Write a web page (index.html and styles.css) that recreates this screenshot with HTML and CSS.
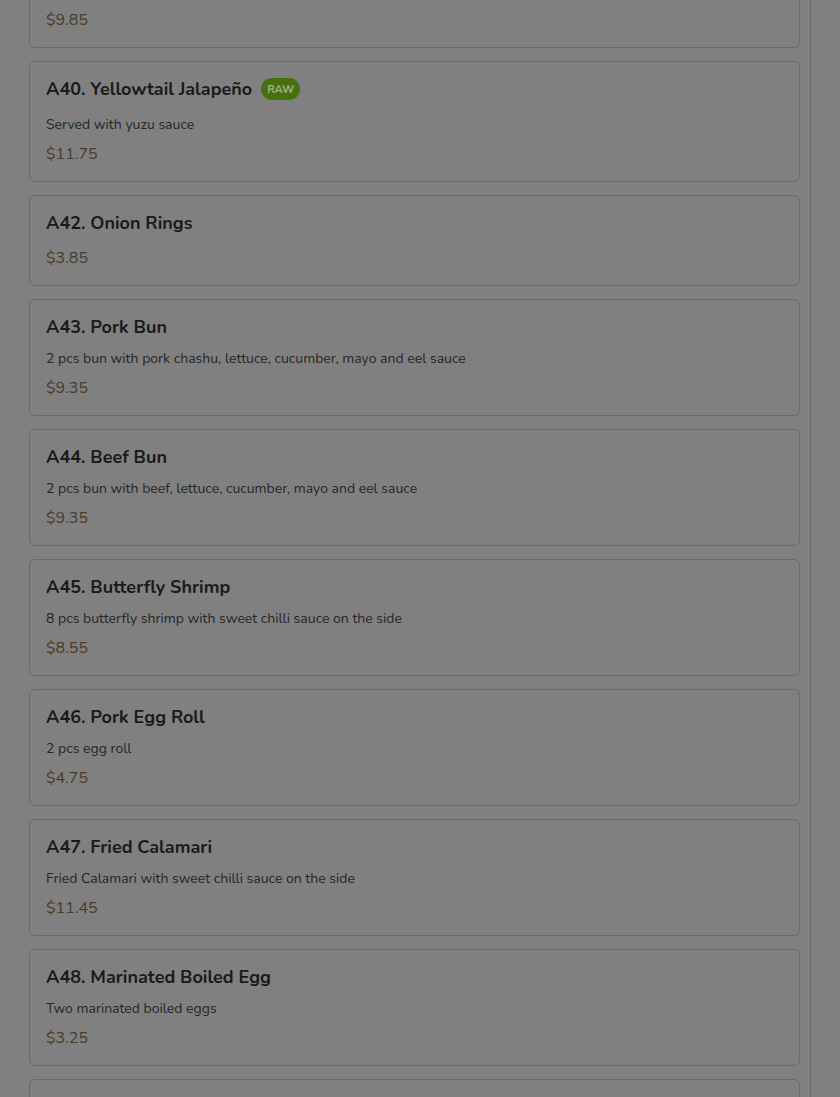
FILE: index.html
```html
<!DOCTYPE html>
<html lang="en">
<head>
<meta charset="utf-8">
<title>Menu</title>
<link rel="stylesheet" href="styles.css">
</head>
<body>
<div class="panel">
  <div class="list">
    <div class="card">
      <div class="title-row"><h3 class="title">A39. Shrimp Tempura</h3></div>
      <p class="desc">4 pcs shrimp tempura with tempura sauce</p>
      <div class="price">$9.85</div>
    </div>
    <div class="card">
      <div class="title-row title-row--badge"><h3 class="title">A40. Yellowtail Jalapeño</h3><span class="badge">RAW</span></div>
      <p class="desc">Served with yuzu sauce</p>
      <div class="price">$11.75</div>
    </div>
    <div class="card">
      <div class="title-row title-row--solo"><h3 class="title">A42. Onion Rings</h3></div>
      <div class="price">$3.85</div>
    </div>
    <div class="card">
      <div class="title-row"><h3 class="title">A43. Pork Bun</h3></div>
      <p class="desc">2 pcs bun with pork chashu, lettuce, cucumber, mayo and eel sauce</p>
      <div class="price">$9.35</div>
    </div>
    <div class="card">
      <div class="title-row"><h3 class="title">A44. Beef Bun</h3></div>
      <p class="desc">2 pcs bun with beef, lettuce, cucumber, mayo and eel sauce</p>
      <div class="price">$9.35</div>
    </div>
    <div class="card">
      <div class="title-row"><h3 class="title">A45. Butterfly Shrimp</h3></div>
      <p class="desc">8 pcs butterfly shrimp with sweet chilli sauce on the side</p>
      <div class="price">$8.55</div>
    </div>
    <div class="card">
      <div class="title-row"><h3 class="title">A46. Pork Egg Roll</h3></div>
      <p class="desc">2 pcs egg roll</p>
      <div class="price">$4.75</div>
    </div>
    <div class="card">
      <div class="title-row"><h3 class="title">A47. Fried Calamari</h3></div>
      <p class="desc">Fried Calamari with sweet chilli sauce on the side</p>
      <div class="price">$11.45</div>
    </div>
    <div class="card">
      <div class="title-row"><h3 class="title">A48. Marinated Boiled Egg</h3></div>
      <p class="desc">Two marinated boiled eggs</p>
      <div class="price">$3.25</div>
    </div>
    <div class="card">
      <div class="title-row"><h3 class="title">A49. Chicken Gyoza</h3></div>
      <p class="desc">6 pcs pan fried chicken dumplings</p>
      <div class="price">$7.95</div>
    </div>
  </div>
</div>
</body>
</html>
```
FILE: styles.css
```css
html, body {
  margin: 0;
  padding: 0;
  background: #808080;
  height: 100%;
  overflow: hidden;
}
body {
  font-family: "Nunito", "Lato", "Noto Sans", sans-serif;
  color: #1a1a1a;
}
.panel {
  width: 811px;
  height: 100%;
  box-sizing: border-box;
  border-right: 1px solid #6a6a6a;
  padding: 0 10px 0 29px;
  display: flex;
  flex-direction: column;
}
.list {
  margin-top: -69px;
  display: flex;
  flex-direction: column;
  gap: 13px;
}
.card {
  border: 1px solid #6b6b6b;
  border-radius: 6px;
  padding: 16px;
  display: flex;
  flex-direction: column;
  flex-shrink: 0;
}
.title-row {
  display: flex;
  align-items: center;
  gap: 9px;
  margin-bottom: 11px;
}
.title-row--badge {
  margin-bottom: 15px;
}
.title-row--solo {
  margin-bottom: 13px;
}
.title {
  margin: 0;
  font-size: 18px;
  line-height: 22px;
  font-weight: 700;
  color: #1a1a1a;
}
.badge {
  display: inline-flex;
  align-items: center;
  justify-content: center;
  height: 22px;
  padding: 0 6px;
  border-radius: 11px;
  background: #47700e;
  color: #a0b386;
  font-size: 11px;
  font-weight: 700;
}
.desc {
  margin: 0 0 9px 0;
  font-size: 14px;
  line-height: 19px;
  color: #262626;
}
.price {
  font-size: 16px;
  line-height: 22px;
  color: #483c2a;
}
```
